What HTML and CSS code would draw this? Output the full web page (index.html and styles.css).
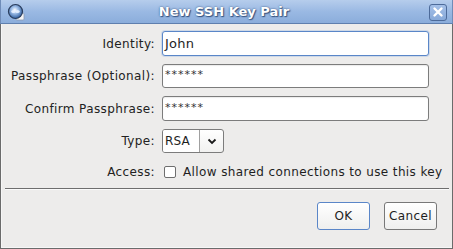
FILE: index.html
```html
<!DOCTYPE html>
<html>
<head>
<meta charset="utf-8">
<link rel="stylesheet" href="styles.css">
</head>
<body>
<div class="window">
  <div class="titlebar">
    <svg class="app-icon" width="18" height="18" viewBox="0 0 18 18">
      <defs>
        <radialGradient id="orb" cx="45%" cy="40%" r="60%">
          <stop offset="0" stop-color="#ffffff"/>
          <stop offset="0.35" stop-color="#a9c7ee"/>
          <stop offset="1" stop-color="#2e5d9e"/>
        </radialGradient>
      </defs>
      <rect x="9" y="10" width="8" height="7" rx="1" fill="#f4f4f4" stroke="#8a9bb3" stroke-width="0.8"/>
      <circle cx="8.5" cy="8.5" r="7" fill="url(#orb)" stroke="#2a3d5c" stroke-width="1.2"/>
      <ellipse cx="6.5" cy="8.5" rx="2.2" ry="1.6" fill="#e8f1ff" opacity="0.9"/>
      <ellipse cx="10.5" cy="8.5" rx="2.2" ry="1.6" fill="#e8f1ff" opacity="0.9"/>
    </svg>
    <div class="title">New SSH Key Pair</div>
    <div class="close">
      <svg width="12" height="12" viewBox="0 0 12 12">
        <path d="M2.5 2.5 L9.5 9.5 M9.5 2.5 L2.5 9.5" stroke="#ffffff" stroke-width="2.4" stroke-linecap="round"/>
      </svg>
    </div>
  </div>
  <div class="content">
    <div class="form">
      <label class="label">Identity:</label>
      <div class="entry focused">John</div>
      <label class="label">Passphrase (Optional):</label>
      <div class="entry secret">******</div>
      <label class="label">Confirm Passphrase:</label>
      <div class="entry secret">******</div>
      <label class="label">Type:</label>
      <div class="combo">
        <span class="combo-text">RSA</span>
        <span class="combo-arrow">
          <svg width="10" height="7" viewBox="0 0 10 7"><path d="M1.5 1.5 L5 5 L8.5 1.5" fill="none" stroke="#1a1a1a" stroke-width="1.8"/></svg>
        </span>
      </div>
      <label class="label">Access:</label>
      <div class="check-row">
        <span class="checkbox"></span>
        <span class="check-text">Allow shared connections to use this key</span>
      </div>
    </div>
    <div class="separator"></div>
    <div class="buttons">
      <div class="button default">OK</div>
      <div class="button">Cancel</div>
    </div>
  </div>
</div>
</body>
</html>
```
FILE: styles.css
```css
html, body {
  margin: 0;
  padding: 0;
  background: #edeceb;
}
.window {
  width: 453px;
  height: 249px;
  box-sizing: border-box;
  border: 1px solid #6b6b6b;
  border-top: none;
  display: flex;
  flex-direction: column;
  font-family: "DejaVu Sans", sans-serif;
  font-size: 12px;
  color: #1e1e1e;
  background: #edeceb;
}
.titlebar {
  height: 24px;
  box-sizing: border-box;
  background: linear-gradient(#b6cdec, #9ab9e3 50%, #8baddb);
  border-bottom: 1px solid #5f7fae;
  display: flex;
  align-items: center;
  margin: 0 -1px;
  border-left: 1px solid #6f8cb8;
  border-right: 1px solid #6f8cb8;
}
.app-icon {
  margin-left: 6px;
}
.title {
  flex: 1;
  text-align: center;
  color: #ffffff;
  font-weight: bold;
  font-size: 13px;
  text-shadow: 0 0 2px #2c4a78, 1px 1px 1px #3a5784;
  margin-right: 6px;
}
.close {
  width: 18px;
  height: 17px;
  box-sizing: border-box;
  border: 1px solid #4d6b9a;
  border-radius: 3px;
  background: linear-gradient(#a4c0e8, #87a9d9);
  display: flex;
  align-items: center;
  justify-content: center;
  margin-right: 5px;
  margin-top: 1px;
}
.content {
  flex: 1;
  display: flex;
  flex-direction: column;
  border-left: 1px solid #f6f6f6;
  border-bottom: 1px solid #f6f6f6;
  letter-spacing: 0.38px;
}
.form {
  display: grid;
  grid-template-columns: 153px 267px;
  grid-template-rows: 25px 24px 25px 24px 22px;
  row-gap: 8px;
  column-gap: 7px;
  padding-top: 7px;
  align-items: center;
}
.form > .check-row { grid-column: 2; }
.label {
  justify-self: end;
  color: #222222;
  white-space: nowrap;
}
.entry {
  height: 100%;
  box-sizing: border-box;
  background: #ffffff;
  border: 1px solid #7c7c7c;
  border-radius: 3px;
  display: flex;
  align-items: center;
  padding-left: 2px;
  box-shadow: inset 0 1px 1px rgba(0,0,0,0.08);
}
.entry.focused {
  border-color: #5a86c8;
  box-shadow: 0 0 0 1px rgba(120,160,220,0.25);
  font-size: 13px;
  letter-spacing: 0.2px;
}
.entry.secret {
  font-size: 11px;
  letter-spacing: 1px;
  color: #333333;
  padding-top: 0;
  padding-bottom: 3px;
}
.combo {
  width: 62px;
  height: 100%;
  box-sizing: border-box;
  border: 1px solid #7c7c7c;
  border-radius: 3px;
  background: linear-gradient(#ffffff, #f1f1f0);
  display: flex;
  align-items: stretch;
}
.combo-text {
  width: 37px;
  box-sizing: border-box;
  padding-left: 2px;
  display: flex;
  align-items: center;
  border-right: 1px solid #a0a0a0;
  background: #ffffff;
  border-radius: 2px 0 0 2px;
  letter-spacing: 0.2px;
}
.combo-arrow {
  flex: 1;
  display: flex;
  align-items: center;
  justify-content: center;
}
.check-row {
  display: flex;
  align-items: center;
  white-space: nowrap;
}
.checkbox {
  flex: none;
  width: 12px;
  height: 12px;
  box-sizing: border-box;
  border: 1px solid #6e6e6e;
  border-radius: 2px;
  background: #ffffff;
  margin-left: 2px;
  margin-right: 7px;
}
.separator {
  height: 1px;
  background: #6e6e6e;
  border-bottom: 1px solid #fafafa;
  margin: 5px 3px 0 3px;
}
.buttons {
  display: flex;
  justify-content: flex-end;
  gap: 14px;
  padding-top: 12px;
  padding-right: 15px;
}
.button {
  width: 53px;
  height: 28px;
  box-sizing: border-box;
  border: 1px solid #787878;
  border-radius: 3px;
  background: linear-gradient(#ffffff, #efefee);
  display: flex;
  align-items: center;
  justify-content: center;
  color: #1e1e1e;
}
.button.default {
  border-color: #5a86c8;
}
```
